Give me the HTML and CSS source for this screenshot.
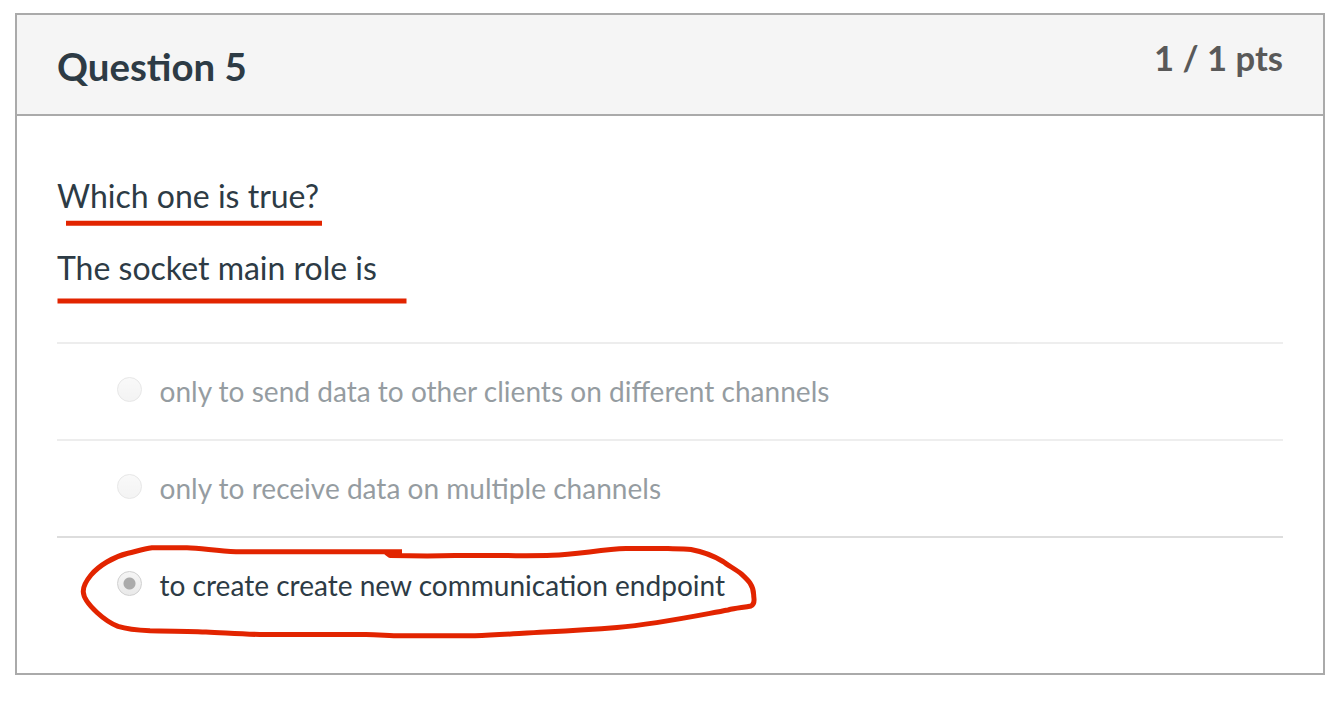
FILE: index.html
```html
<!DOCTYPE html>
<html lang="en">
<head>
<meta charset="utf-8">
<title>Question 5</title>
<link rel="stylesheet" href="styles.css">
</head>
<body>
<section class="question">
  <header class="question-header">
    <h1 class="question-name">Question 5</h1>
    <div class="question-points">1 / 1 pts</div>
  </header>
  <div class="question-body">
    <p class="prompt prompt-first">Which one is true?</p>
    <p class="prompt prompt-second">The socket main role is</p>
    <div class="answers">
      <div class="answer muted"><span class="radio"></span><span class="label">only to send data to other clients on different channels</span></div>
      <div class="answer muted"><span class="radio"></span><span class="label">only to receive data on multiple channels</span></div>
      <div class="answer"><span class="radio selected"></span><span class="label">to create create new communication endpoint</span></div>
    </div>
  </div>
</section>
<svg class="markup" width="1340" height="701" viewBox="0 0 1340 701">
  <path d="M66 223.3H322" />
  <path d="M57.500 301H406.500" />
  <path d="M402 551.7H236C216 551 201 548 187 547.800H152C143 549 136 551.500 128 553.300C113 557 99 565.500 91 575C84 583.500 83 588 83.300 592C83.500 598 90 606 97 612.500C104 619 112 624 118 626.400C128 629.500 139 630.300 150 630.800C172 631 190 631 206 632C228 633 245 634.500 265 634.500H366C378 634.500 389 635.700 401 635.800H475C498 635 519 633.400 545 632C570 630.800 593 629.500 617 627.500C657 624 695 616 728 610C736 608 744 607.500 751 606C756 604 753.500 598 753.700 595C753.500 585 748 580 742 574.500C736 569.500 729 566 723 561.500C714 556 702 551.500 691 549.500C684 548.500 676 548.700 668 548.600H626C602 549.300 577 554.500 552 555.300C534 556 516 555.500 497 555.600H455C430 556.300 412 556 390 555.500L386 552.500" />
</svg>
</body>
</html>
```
FILE: styles.css
```css
body {
  margin: 0;
  background: #fff;
  color: #2d3b45;
  font-family: Lato, sans-serif;
}
.question {
  box-sizing: border-box;
  width: 1310px;
  height: 662px;
  margin: 13px 0 0 15px;
  border: 2px solid #aaa;
}
.question-header {
  box-sizing: border-box;
  display: flex;
  justify-content: space-between;
  height: 101px;
  padding: 0 40px;
  border-bottom: 2px solid #aaa;
  background: #f5f5f5;
}
.question-name {
  margin: 29px 0 0;
  font-size: 38.400px;
  line-height: 44px;
  white-space: nowrap;
}
.question-points {
  margin-top: 21px;
  font-size: 34.600px;
  font-weight: 700;
  line-height: 44px;
  color: #595959;
}
.question-body {
  padding: 56px 40px 0;
}
.prompt {
  margin: 0 0 24px;
  font-size: 32px;
  line-height: 48px;
}
.prompt-second {
  margin-bottom: 50px;
}
.answer {
  box-sizing: border-box;
  display: flex;
  align-items: flex-start;
  gap: 17.500px;
  height: 97px;
  padding: 33px 0 0 60px;
  border-top: 2px solid #ddd;
}
.muted {
  opacity: 0.5;
}
.radio {
  box-sizing: border-box;
  flex: none;
  width: 25px;
  height: 25px;
  border: 1px solid #d0d0d0;
  border-radius: 50%;
  background: linear-gradient(#f5f5f5, #e9e9e9);
}
.selected {
  background: radial-gradient(circle, #aaa 5.5px, transparent 6.5px), linear-gradient(#f5f5f5, #e9e9e9);
}
.label {
  margin-top: -2px;
  font-size: 28.050px;
  line-height: 32px;
  white-space: nowrap;
}
.markup {
  position: absolute;
  left: 0;
  top: 0;
  fill: none;
  stroke: #e22400;
  stroke-width: 5px;
  stroke-linejoin: round;
}
```
